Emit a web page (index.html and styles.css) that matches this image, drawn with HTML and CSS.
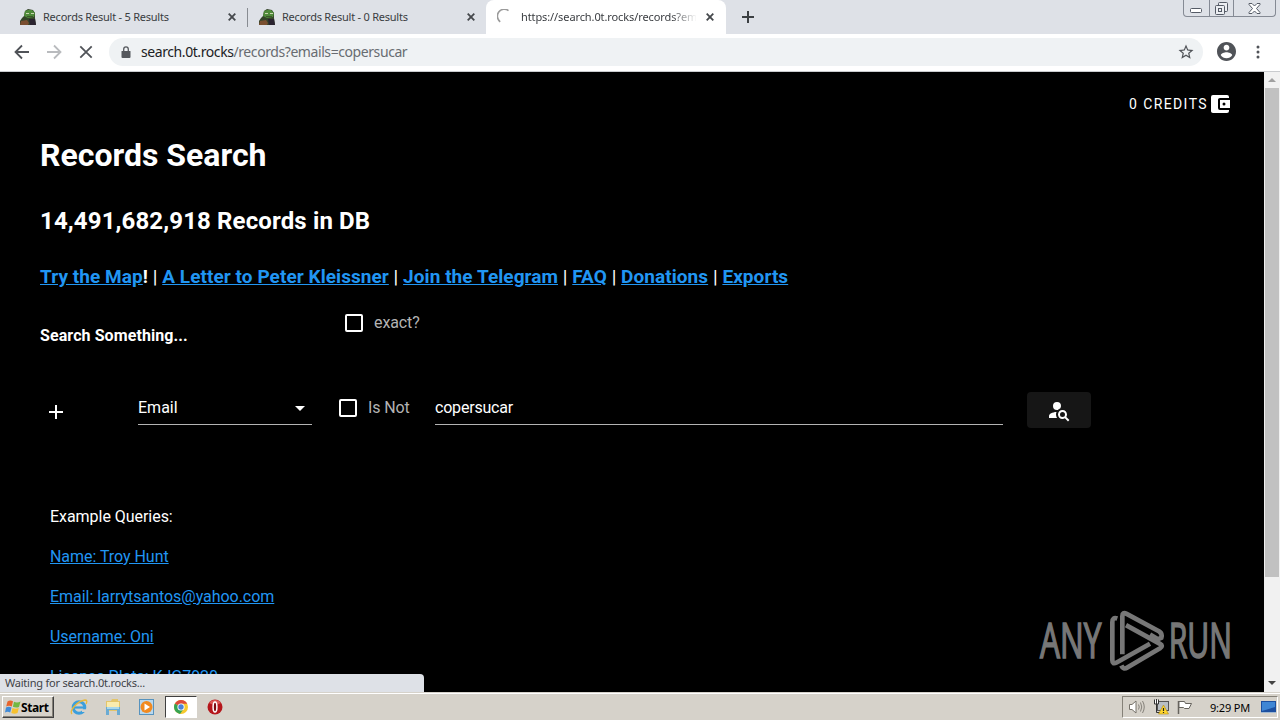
FILE: index.html
```html
<!DOCTYPE html>
<html lang="en">
<head>
  <meta charset="UTF-8">
  <title>Records Search</title>
  <link rel="stylesheet" href="styles.css">
</head>
<body>
  <svg class="defs" width="0" height="0">
    <symbol id="frog" viewBox="0 0 16 16">
      <path d="M0 16V12L2 9L4 7L5 2L8 0L13 1L15 4V9L16 16Z" fill="#35452a"/>
      <path d="M4 7L5 2L8 1H12L15 4L14 8L8 9Z" fill="#4f8a3a"/>
      <path d="M6 4h3v1H6zM11 4h3v1h-3z" fill="#c9d6b0"/>
      <path d="M7 7h6v1H7z" fill="#3c5a2b"/>
      <path d="M1 12L7 11L9 14L8 16H0Z" fill="#7a4f30"/>
      <path d="M9 10H15L16 16H10Z" fill="#2b2430"/>
    </symbol>
    <symbol id="close" viewBox="0 0 8 8">
      <path d="M.7 .7L7.3 7.3M7.3 .7L.7 7.3" stroke="#45484c" stroke-width="1.8"/>
    </symbol>
  </svg>

  <!-- browser tabs -->
  <div class="tab-strip">
    <div class="tab">
      <svg class="favicon"><use href="#frog"/></svg>
      <span class="tab-title">Records Result - 5 Results</span>
      <svg class="tab-close"><use href="#close"/></svg>
    </div>
    <div class="tab divided">
      <svg class="favicon"><use href="#frog"/></svg>
      <span class="tab-title">Records Result - 0 Results</span>
      <svg class="tab-close"><use href="#close"/></svg>
    </div>
    <div class="tab active">
      <svg class="favicon" viewBox="0 0 16 16"><path d="M3.2 12.8A6.6 6.6 0 0 1 11.5 1.6" fill="none" stroke="#9a9a9a" stroke-width="1.6"/></svg>
      <span class="tab-title tab-url">https://search.0t.rocks/records?emails</span>
      <svg class="tab-close"><use href="#close"/></svg>
    </div>
    <svg class="new-tab" viewBox="0 0 12 12"><path d="M6 0V12M0 6H12" stroke="#3c4043" stroke-width="2"/></svg>
    <div class="win-controls">
      <span class="win-min"><svg width="13" height="5"><rect x=".5" y=".5" width="11" height="4" rx="1" fill="#fff" stroke="#555b66"/></svg></span>
      <span class="win-max"><svg width="13" height="13" fill="#eceef2" stroke="#555b66"><rect x="3.5" y=".5" width="9" height="9" rx="1"/><rect x=".5" y="3.5" width="9" height="9" rx="1"/><rect x="3.5" y="6.5" width="3" height="3"/></svg></span>
      <span class="win-close"><svg width="13" height="11" viewBox="0 0 13 11"><path d="M1 .5H4L6.5 3L9 .5H12V1.5L8.5 5.5L12 9.5V10.5H9L6.5 8L4 10.5H1V9.5L4.5 5.5L1 1.5Z" fill="#fff" stroke="#555b66"/></svg></span>
    </div>
  </div>

  <!-- address bar -->
  <div class="toolbar">
    <svg class="nav" viewBox="0 0 16 16"><path d="M15 8H2M8 1.5L1.5 8L8 14.5" stroke="#505358"/></svg>
    <svg class="nav" viewBox="0 0 16 16"><path d="M1 8H14M8 1.5L14.5 8L8 14.5" stroke="#b9bbbe"/></svg>
    <svg class="nav" viewBox="0 0 16 16"><path d="M2.3 2.3L13.7 13.7M13.7 2.3L2.3 13.7" stroke="#505358"/></svg>
    <div class="omnibox">
      <svg class="lock" viewBox="0 0 10 12"><path d="M1 5H9Q9.5 5 9.5 5.5V11Q9.5 12 8.5 12H1.5Q.5 12 .5 11V5.5Q.5 5 1 5Z" fill="#55585d"/><path d="M2.7 5V3.2a2.3 2.3 0 0 1 4.6 0V5" fill="none" stroke="#55585d" stroke-width="1.3"/></svg>
      <div class="url"><span class="host">search.0t.rocks</span>/records?emails=copersucar</div>
      <svg class="star" viewBox="0 0 24 24"><path d="M22 9.24l-7.19-.62L12 2 9.19 8.63 2 9.24l5.46 4.73L5.82 21 12 17.27 18.18 21l-1.63-7.03L22 9.24zM12 15.4l-3.76 2.27 1-4.28-3.32-2.88 4.38-.38L12 6.1l1.71 4.04 4.38.38-3.32 2.88 1 4.28L12 15.4z"/></svg>
    </div>
    <svg class="avatar" viewBox="2 2 20 20"><path d="M12 2C6.48 2 2 6.48 2 12s4.48 10 10 10 10-4.48 10-10S17.52 2 12 2zm0 3c1.66 0 3 1.34 3 3s-1.34 3-3 3-3-1.34-3-3 1.34-3 3-3zm0 14.2c-2.5 0-4.71-1.28-6-3.22.03-1.99 4-3.08 6-3.08 1.99 0 5.97 1.09 6 3.08-1.29 1.94-3.5 3.22-6 3.22z"/></svg>
    <svg class="dots" viewBox="0 0 4 14"><circle cx="2" cy="2" r="1.5"/><circle cx="2" cy="7" r="1.5"/><circle cx="2" cy="12" r="1.5"/></svg>
  </div>

  <div class="viewport">
    <main class="page">
      <div class="credits">
        <span>0 CREDITS</span>
        <svg viewBox="0 0 24 24"><path d="M21,18V19A2,2 0 0,1 19,21H5C3.89,21 3,20.1 3,19V5A2,2 0 0,1 5,3H19A2,2 0 0,1 21,5V6H12C10.89,6 10,6.9 10,8V16A2,2 0 0,0 12,18M12,16H22V8H12M16,13.5A1.5,1.5 0 0,1 14.5,12A1.5,1.5 0 0,1 16,10.5A1.5,1.5 0 0,1 17.5,12A1.5,1.5 0 0,1 16,13.5Z"/></svg>
      </div>
      <h1>Records Search</h1>
      <h2>14,491,682,918 Records in DB</h2>
      <nav class="links"><b><a href="#">Try the Map</a>!</b> | <b><a href="#">A Letter to Peter Kleissner</a></b> | <b><a href="#">Join the Telegram</a></b> | <b><a href="#">FAQ</a></b> | <b><a href="#">Donations</a></b> | <b><a href="#">Exports</a></b></nav>
      <div class="search-head">
        <b>Search Something...</b>
        <label class="check"><i></i>exact?</label>
      </div>
      <div class="search-row">
        <svg class="plus" viewBox="0 0 14 14"><path d="M7 0V14M0 7H14"/></svg>
        <div class="field select">Email<svg viewBox="0 0 10 5"><path d="M0 0H10L5 5Z"/></svg></div>
        <label class="check is-not"><i></i>Is Not</label>
        <div class="field query">copersucar</div>
        <button class="search-btn" aria-label="Search">
          <svg viewBox="0 0 24 24"><path d="M15.5,12C18,12 20,14 20,16.5C20,17.38 19.75,18.21 19.31,18.9L22.39,22L21,23.39L17.88,20.32C17.19,20.75 16.37,21 15.5,21C13,21 11,19 11,16.5C11,14 13,12 15.5,12M15.5,14A2.5,2.5 0 0,0 13,16.5A2.5,2.5 0 0,0 15.5,19A2.5,2.5 0 0,0 18,16.5A2.5,2.5 0 0,0 15.5,14M10,4A4,4 0 0,1 14,8C14,8.91 13.69,9.75 13.18,10.43C12.32,10.75 11.55,11.26 10.91,11.9L10,12A4,4 0 0,1 6,8A4,4 0 0,1 10,4M2,20V18C2,15.88 5.31,14.14 9.5,14C9.18,14.78 9,15.62 9,16.5C9,17.79 9.38,19 10,20H2Z"/></svg>
        </button>
      </div>
      <div class="examples">
        <p>Example Queries:</p>
        <p><a href="#">Name: Troy Hunt</a></p>
        <p><a href="#">Email: larrytsantos@yahoo.com</a></p>
        <p><a href="#">Username: Oni</a></p>
        <p><a href="#">License Plate: KJG7920</a></p>
      </div>
    </main>
    <div class="scrollbar">
      <svg viewBox="0 0 16 16"><path d="M4 10L8 6L12 10Z" fill="#a0a0a0"/></svg>
      <div class="thumb"></div>
      <svg viewBox="0 0 16 16"><path d="M4 5L8 9L12 5Z" fill="#444"/></svg>
    </div>

    <svg class="watermark" viewBox="54 54 582 194">
      <g class="letters">
        <text x="60" y="205" textLength="184" lengthAdjust="spacingAndGlyphs">ANY</text>
        <text x="446" y="205" textLength="190" lengthAdjust="spacingAndGlyphs">RUN</text>
      </g>
      <g class="mark">
        <path d="M292 85Q277 80 277 96V210Q277 224 290 217L390 161"/>
        <path d="M307 192V78Q307 64 320 71L418 124Q428 131 424 143L414 147L390 133"/>
        <path d="M318 105L420 161Q431 167 420 174L322 232Q310 240 304 226"/>
      </g>
    </svg>
    <div class="status">Waiting for search.0t.rocks...</div>
  </div>

  <div class="taskbar">
    <div class="start">
      <svg viewBox="0 0 16 16">
        <path d="M2.5 2.5Q5 .8 8 2.3L6.8 7.5Q4 6 1.2 7.5Z" fill="#e8642c"/>
        <path d="M9 2.7Q12 4.2 15.5 2.5L14 8Q11 9.3 7.9 7.8Z" fill="#73b843"/>
        <path d="M1 8.5Q3.8 7 6.5 8.5L5.2 13.5Q2.5 12 0 13.5Z" fill="#408bd8"/>
        <path d="M7.5 8.9Q10.5 10.4 13.8 8.9L12.5 14Q9.5 15.3 6.3 13.9Z" fill="#f7c12e"/>
      </svg>
      <b>Start</b>
    </div>
    <div class="task">
      <svg viewBox="0 0 18 18"><circle cx="9" cy="9.5" r="5.8" fill="none" stroke="#3c9fdc" stroke-width="3"/><path d="M4 9.5H14.5" stroke="#3c9fdc" stroke-width="2.2"/><path d="M12 11.3H17V14H12Z" fill="#d6d2ca"/><path d="M2 16C-1 13 7 3 15 2Q18 2 16 6" fill="none" stroke="#e9b93a" stroke-width="1.3"/></svg>
    </div>
    <div class="task">
      <svg viewBox="0 0 18 18"><path d="M2 3H7L8 1H14V3H16V13H2Z" fill="#e3c56a"/><path d="M3 4H15V9H3Z" fill="#f9ebae"/><path d="M2 9H16V17H13V12H5V17H2Z" fill="#6aabd3"/><path d="M3 9H15V11H3Z" fill="#a8d7ec"/></svg>
    </div>
    <div class="task">
      <svg viewBox="0 0 18 18"><rect x="1.5" y="1.5" width="14" height="15" fill="#b9d8ee" stroke="#5793be"/><circle cx="8.500" cy="9" r="6" fill="#f18a20"/><path d="M6.5 5.500L12 9L6.5 12.500Z" fill="#fff"/></svg>
    </div>
    <div class="task pressed">
      <svg viewBox="0 0 18 18"><circle cx="9" cy="9" r="7" fill="#f6c92e"/><path d="M9 9L2.94 5.5A7 7 0 0 0 8 15.9L12 10.5Z" fill="#36a353"/><path d="M9 9L2.94 5.5A7 7 0 0 1 15.2 5.7H9Z" fill="#dd493b"/><circle cx="9" cy="9" r="3.6" fill="#fff"/><circle cx="9" cy="9" r="2.7" fill="#4a82d8"/></svg>
    </div>
    <div class="task">
      <svg viewBox="0 0 18 18"><circle cx="9" cy="9" r="7.5" fill="#b5161b"/><path d="M3 5A7.5 7.5 0 0 1 15 5Q9 8 3 5Z" fill="#dc5754"/><ellipse cx="9" cy="9" rx="1.9" ry="5" fill="#7c0b10" stroke="#fff" stroke-width="1.5"/></svg>
    </div>
    <div class="tray">
      <svg width="18" height="16" viewBox="0 0 18 16"><path d="M1.5 5.5H4L8 2V14L4 10.5H1.5Z" fill="#fff" stroke="#77736b"/><path d="M10.5 5.5Q12 8 10.5 10.5M12.5 3.5Q15 8 12.5 12.5M14.5 2Q18 8 14.5 14" fill="none" stroke="#85817a"/></svg>
      <svg width="16" height="16" viewBox="0 0 16 16"><rect x="4.5" y="2.5" width="11" height="9" fill="#b9bfc4" stroke="#555"/><path d="M1 1H6V5H1Z" fill="#fff"/><path d="M1.5 .5V5H5.5V.5M3.5 0V13.5H9" fill="none" stroke="#333"/><path d="M10.5 6L15.5 15H5.5Z" fill="#ffd62e" stroke="#b08a12" stroke-width=".6"/><path d="M10.5 9V12M10.5 13V14" stroke="#222" stroke-width="1.2"/></svg>
      <svg width="17" height="16" viewBox="0 0 17 16"><path d="M2.5 2V15" stroke="#66635d" stroke-width="1.5"/><path d="M3 2.5H8.500L9.500 4.500H15.500L13 9.500H8.500L7.500 8.500H3Z" fill="#fff" stroke="#66635d"/></svg>
      <span class="clock">9:29 PM</span>
      <svg class="desk" width="15" height="13" viewBox="0 0 15 13"><rect width="15" height="11" fill="#1c4f9f"/><path d="M1 1H14V6L1 10Z" fill="#3f86d4"/><path d="M0 11H15V12H0Z" fill="#9fb8d2"/></svg>
    </div>
  </div>
</body>
</html>
```
FILE: styles.css
```css
* { box-sizing: border-box; }
body {
  margin: 0;
  width: 1280px;
  height: 720px;
  overflow: hidden;
  display: flex;
  flex-direction: column;
  font-family: "Noto Sans", sans-serif;
  background: #000;
}
svg { display: block; flex: none; }
.defs { position: absolute; }

/* tabs */
.tab-strip {
  display: flex;
  height: 34px;
  padding-left: 8px;
  background: #dee1e7;
}
.tab {
  display: flex;
  align-items: center;
  width: 239px;
  padding: 0 11px 0 12px;
  font-size: 11px;
  letter-spacing: -.23px;
  color: #3a3d41;
}
.divided {
  background: linear-gradient(#888c92, #888c92) 0 8px / 1px 19px no-repeat;
}
.tab.active {
  width: 240px;
  padding: 0 12px 0 11px;
  background: #fff;
  border-radius: 8px 8px 0 0;
}
.favicon { width: 16px; height: 16px; }
.tab-title {
  flex: 1;
  margin-left: 7px;
  padding-bottom: 2px;
  overflow: hidden;
  white-space: nowrap;
}
.tab-url {
  margin: 0 10px 0 8px;
  letter-spacing: -.1px;
  -webkit-mask-image: linear-gradient(90deg, #000 150px, transparent 176px);
  mask-image: linear-gradient(90deg, #000 150px, transparent 176px);
}
.tab-close { width: 8px; height: 8px; }
.new-tab {
  width: 12px;
  height: 12px;
  margin: 11px auto 0 16px;
}
.win-controls {
  display: flex;
  width: 93px;
  height: 17px;
  margin-right: 4px;
  border: 1px solid #858a94;
  border-top: 0;
  border-radius: 0 0 4px 4px;
}
.win-controls span {
  display: flex;
  justify-content: center;
  align-items: center;
  width: 25px;
}
.win-controls .win-min { align-items: flex-end; padding-bottom: 3px; }
.win-controls .win-max { border: 1px solid #858a94; border-width: 0 1px; }
.win-controls .win-close { width: 41px; }

/* toolbar */
.toolbar {
  display: flex;
  align-items: center;
  height: 38px;
  padding: 0 19px 2px 14px;
  background: #fff;
  border-bottom: 1px solid #c9cbce;
}
.nav {
  width: 16px;
  height: 16px;
  margin-right: 16px;
  fill: none;
  stroke-width: 1.8;
}
.omnibox {
  display: flex;
  align-items: center;
  width: 1094px;
  height: 28px;
  margin-left: -1px;
  padding: 0 9px 0 12px;
  background: #eff2f4;
  border-radius: 14px;
}
.lock { width: 10px; height: 12px; }
.url {
  flex: 1;
  margin-left: 10px;
  font-size: 14px;
  letter-spacing: -.42px;
  color: #686c71;
}
.host { color: #202124; }
.star { width: 18px; height: 18px; margin-right: -1px; fill: #505358; }
.avatar { width: 19px; height: 19px; margin-left: 14px; fill: #505358; }
.dots { width: 4px; height: 14px; margin-left: 20px; fill: #505358; }

/* page */
.viewport {
  position: relative;
  display: flex;
  height: 620px;
}
.page {
  flex: 1;
  height: 620px;
  overflow: hidden;
  padding: 20px 32px 0 40px;
  font-family: Roboto, sans-serif;
  font-size: 16px;
  line-height: 24px;
  color: #fff;
}
.page a { color: #2196f3; }
.credits {
  display: flex;
  justify-content: flex-end;
  height: 43px;
  font-size: 14px;
  letter-spacing: 1.4px;
}
.credits svg { width: 24px; height: 24px; fill: #fff; }
h1 {
  margin: 0 0 30px;
  font-size: 32px;
  line-height: 40px;
}
h2 {
  margin: 0 0 28px;
  font-size: 24px;
  line-height: 32px;
  letter-spacing: .13px;
}
.links {
  height: 46px;
  font-size: 19px;
  letter-spacing: .06px;
  white-space: nowrap;
}
.search-head {
  display: flex;
  height: 81px;
}
.search-head b { width: 305px; padding-top: 13px; letter-spacing: .09px; }
.check {
  display: flex;
  align-items: center;
  gap: 11px;
  height: 24px;
  letter-spacing: -.1px;
  color: #b3b3b3;
}
.check i {
  width: 18px;
  height: 18px;
  border: 2px solid #fff;
  border-radius: 2px;
}
.search-row {
  display: flex;
  height: 113px;
}
.plus {
  width: 14px;
  height: 14px;
  margin: 13px 0 0 9px;
  stroke: #fff;
  stroke-width: 2;
}
.field {
  height: 33px;
  padding-top: 4px;
  border-bottom: 1px solid #b3b3b3;
}
.select {
  display: flex;
  justify-content: space-between;
  width: 174px;
  margin-left: 75px;
  padding-right: 7px;
}
.select svg { width: 10px; height: 5px; margin-top: 10px; fill: #fff; }
.is-not { width: 96px; margin: 4px 0 0 27px; }
.query { width: 568px; letter-spacing: -.2px; }
.search-btn {
  width: 64px;
  height: 36px;
  margin-left: 24px;
  padding: 0 20px;
  border: 0;
  border-radius: 4px;
  background: #161616;
}
.search-btn svg { width: 24px; height: 24px; fill: #fff; }
.examples { padding-left: 10px; letter-spacing: -.04px; }
.examples p { margin: 0 0 16px; }

.scrollbar {
  display: flex;
  flex-direction: column;
  width: 16px;
  background: #f1f1f1;
}
.scrollbar svg { width: 16px; height: 16px; }
.thumb { height: 489px; margin: 0 1px 99px; background: #c1c1c1; }

/* overlays above the page */
.watermark {
  position: absolute;
  left: 1038px;
  top: 536px;
  width: 194px;
  height: 65px;
  overflow: visible;
}
.letters {
  font-family: "Open Sans", sans-serif;
  font-size: 149px;
  fill: #777;
  stroke: #777;
  stroke-width: 5;
}
.mark { fill: none; stroke: #777; stroke-width: 14; }
.status {
  position: absolute;
  left: 0;
  bottom: 0;
  width: 424px;
  height: 18px;
  padding-left: 5px;
  border-radius: 0 4px 0 0;
  background: #dee1e7;
  font-size: 11px;
  line-height: 18px;
  letter-spacing: -.22px;
  color: #3f4246;
}

/* taskbar */
.taskbar {
  display: flex;
  align-items: center;
  height: 28px;
  padding: 1px 2px 0;
  background: #d6d2ca;
  border-top: 1px solid #d6d2ca;
  box-shadow: inset 0 1px #fff;
}
.start {
  display: flex;
  align-items: center;
  width: 52px;
  height: 22px;
  margin-right: 8px;
  padding-left: 2px;
  border: 1px solid;
  border-color: #fff #404040 #404040 #fff;
  box-shadow: inset -1px -1px #858178;
  font-size: 12px;
  letter-spacing: -.4px;
}
.start svg { width: 16px; height: 16px; }
.task {
  display: flex;
  justify-content: center;
  align-items: center;
  width: 34px;
  height: 22px;
}
.task svg { width: 18px; height: 18px; }
.task.pressed {
  width: 32px;
  margin: 0 1px;
  background: #fff;
  border: 1px solid;
  border-color: #404040 #fff #fff #404040;
}
.tray {
  display: flex;
  align-items: center;
  width: 156px;
  height: 22px;
  margin-left: auto;
  padding-left: 5px;
  border: 1px solid;
  border-color: #858178 #fff #fff #858178;
  gap: 7px;
}
.clock { margin-left: 10px; font-size: 11px; letter-spacing: -.2px; }
.desk { margin-left: 4px; }
```
